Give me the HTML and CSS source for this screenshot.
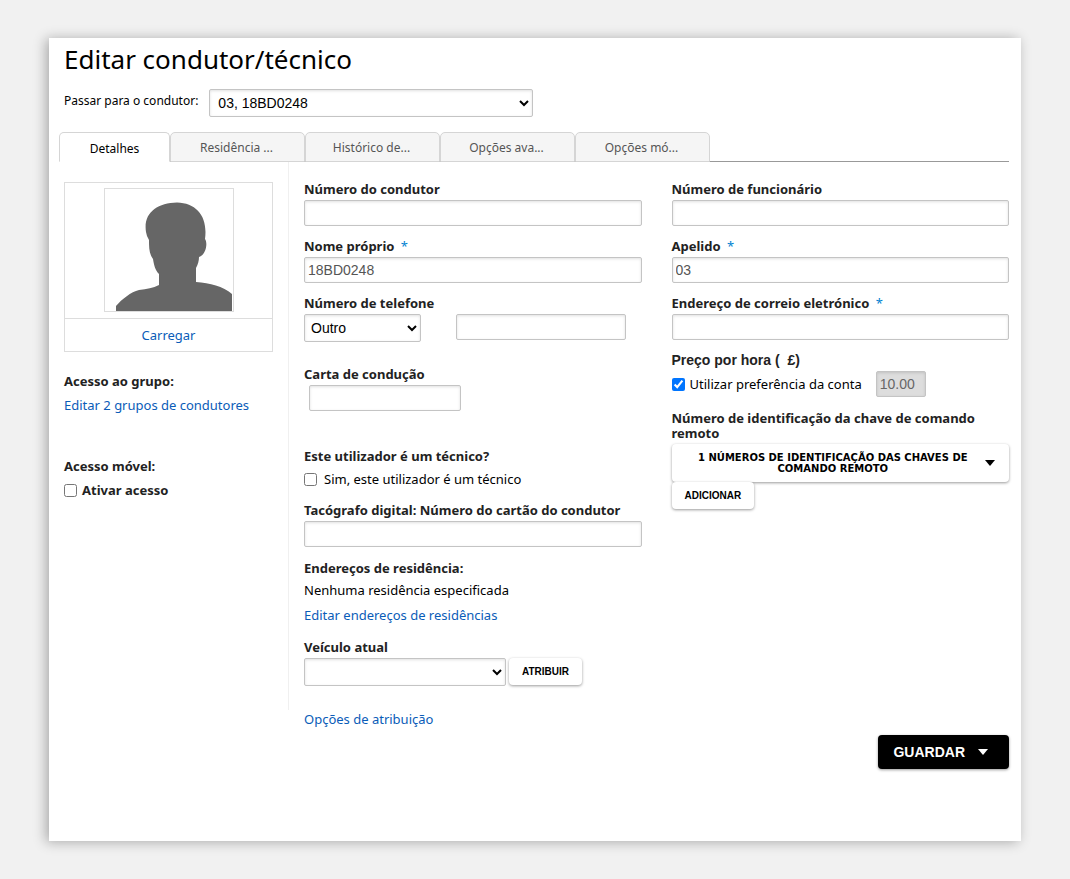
FILE: index.html
```html
<!DOCTYPE html>
<html lang="pt">
<head>
    <meta charset="UTF-8" />
    <meta name="viewport" content="width=device-width, initial-scale=1.0" />
    <title>Editar condutor/técnico</title>
    <link rel="stylesheet" href="styles.css">
</head>
<body>
    <main class="panel">
        <h1>Editar condutor/técnico</h1>

        <div class="switch-driver">
            <label for="driver">Passar para o condutor:</label>
            <select id="driver" name="driver">
                <option>03, 18BD0248</option>
            </select>
        </div>

        <nav class="tabs">
            <button type="button" class="tab active">Detalhes</button>
            <button type="button" class="tab">Residência ...</button>
            <button type="button" class="tab">Histórico de...</button>
            <button type="button" class="tab">Opções ava...</button>
            <button type="button" class="tab">Opções mó...</button>
        </nav>

        <form class="details">
            <aside class="side">
                <div class="photo-card">
                    <div class="photo">
                        <svg viewBox="0 0 128 122" width="128" height="122" aria-hidden="true">
                            <path fill="#666" d="M11 122V117C17 110 26 103 34 101C42 100 48 99 54 96V85C50 81 49 76 48 70C44 65 44 58 44 51L42 47L41 43C38 24 52 14 72 13.500C92 14 103 28 100 50C103 54 101 66 94 68C94 72 93 75 91 79V93C105 94 118 97 127 105V122Z" />
                        </svg>
                    </div>
                    <a href="#" class="upload">Carregar</a>
                </div>

                <h2>Acesso ao grupo:</h2>
                <a href="#" class="group-link">Editar 2 grupos de condutores</a>

                <h2>Acesso móvel:</h2>
                <label class="check bold"><input type="checkbox" name="mobileAccess" /> Ativar acesso</label>
            </aside>

            <div class="columns">
                <div class="column">
                    <div class="field">
                        <label for="driverNumber">Número do condutor</label>
                        <input type="text" id="driverNumber" />
                    </div>
                    <div class="field">
                        <label for="firstName">Nome próprio <span class="required">*</span></label>
                        <input type="text" id="firstName" value="18BD0248" />
                    </div>
                    <div class="field phone-field">
                        <label for="phoneType">Número de telefone</label>
                        <div class="phone-row">
                            <select id="phoneType">
                                <option>Outro</option>
                            </select>
                            <input type="text" id="phone" aria-label="Telefone" />
                        </div>
                    </div>
                    <div class="field licence-field">
                        <label for="licence">Carta de condução</label>
                        <input type="text" id="licence" />
                    </div>
                    <div class="field spaced">
                        <h2>Este utilizador é um técnico?</h2>
                        <label class="check wide"><input type="checkbox" name="technician" /> Sim, este utilizador é um técnico</label>
                    </div>
                    <div class="field spaced">
                        <label for="tachograph">Tacógrafo digital: Número do cartão do condutor</label>
                        <input type="text" id="tachograph" />
                    </div>
                    <div class="field spaced">
                        <h2>Endereços de residência:</h2>
                        <p>Nenhuma residência especificada</p>
                        <a href="#" class="address-link">Editar endereços de residências</a>
                    </div>
                    <div class="field vehicle-field">
                        <label for="vehicle">Veículo atual</label>
                        <div class="vehicle-row">
                            <select id="vehicle">
                                <option></option>
                            </select>
                            <button type="button" class="btn">ATRIBUIR</button>
                        </div>
                    </div>
                    <a href="#">Opções de atribuição</a>
                </div>

                <div class="column">
                    <div class="field">
                        <label for="employeeNumber">Número de funcionário</label>
                        <input type="text" id="employeeNumber" />
                    </div>
                    <div class="field">
                        <label for="lastName">Apelido <span class="required">*</span></label>
                        <input type="text" id="lastName" value="03" />
                    </div>
                    <div class="field">
                        <label for="email">Endereço de correio eletrónico <span class="required">*</span></label>
                        <input type="text" id="email" />
                    </div>
                    <div class="field rate-field">
                        <label for="rate">Preço por hora (&nbsp; £)</label>
                        <div class="rate-row">
                            <label class="check"><input type="checkbox" name="accountRate" checked /> Utilizar preferência da conta</label>
                            <input type="text" id="rate" value="10.00" disabled />
                        </div>
                    </div>
                    <div class="field">
                        <h2 class="fob-title">Número de identificação da chave de comando remoto</h2>
                        <button type="button" class="btn fob-button">
                            <span>1 NÚMEROS DE IDENTIFICAÇÃO DAS CHAVES DE COMANDO REMOTO</span>
                            <i class="caret"></i>
                        </button>
                        <button type="button" class="btn">ADICIONAR</button>
                    </div>
                </div>
            </div>
        </form>

        <div class="actions">
            <button type="button" class="save">GUARDAR <i class="caret"></i></button>
        </div>
    </main>
</body>
</html>
```
FILE: styles.css
```css
* {
    box-sizing: border-box;
}

body {
    margin: 0;
    padding: 38px 49px;
    min-height: 100vh;
    display: flex;
    background-color: #f1f1f1;
    font-family: "Noto Sans", sans-serif;
    font-size: 13px;
    line-height: 20px;
    color: #000;
}

.panel {
    flex: 1;
    padding: 5px 12px 24px 10px;
    background: #fff;
    box-shadow: -3px 1px 12px rgba(0, 0, 0, 0.3);
}

h1 {
    margin: 0 0 14px 5px;
    font-size: 26px;
    font-weight: normal;
    line-height: 32px;
}

h2,
.field > label {
    display: block;
    margin: 0;
    font-size: 13px;
    font-weight: bold;
    line-height: 18px;
    color: #222;
}

p {
    margin: 3px 0 0;
}

a {
    color: #0a5cb8;
    text-decoration: none;
}

input,
select,
button {
    font-family: "Liberation Sans", Arial, sans-serif;
}

input[type="text"],
select {
    border: 1px solid #c4c4c4;
    border-radius: 2px;
    background-color: #fff;
    box-shadow: inset 0 1px 3px rgba(0, 0, 0, 0.12);
    font-size: 14px;
}

input[type="text"] {
    width: 100%;
    height: 26px;
    padding: 0 3px;
    color: #555;
}

select {
    height: 28px;
    padding: 0 2px;
    color: #000;
}

input[type="checkbox"] {
    width: 13px;
    height: 13px;
    margin: 0;
}

.switch-driver {
    display: flex;
    gap: 11px;
    margin: 0 0 15px 5px;
    font-size: 12px;
    line-height: 24px;
}

.switch-driver select {
    width: 324px;
    padding-left: 4px;
}

/* tabs */
.tabs {
    display: flex;
    background: linear-gradient(#999, #999) bottom / 100% 1px no-repeat;
}

.tab {
    width: 135px;
    height: 30px;
    padding: 0 2px 0 0;
    border: 1px solid #d5d5d5;
    border-radius: 5px 5px 0 0;
    background: #f5f5f5;
    font-family: "Noto Sans", sans-serif;
    font-size: 12px;
    color: #555;
}

.tab.active {
    width: 111px;
    padding: 2px 0 0;
    border-bottom-color: #fff;
    background: #fff;
    color: #000;
}

.details {
    display: flex;
    align-items: flex-start;
}

.side {
    width: 230px;
    min-height: 548px;
    padding: 20px 15px 0 5px;
    border-right: 1px solid #f0f0f0;
}

.photo-card {
    margin-bottom: 20px;
    border: 1px solid #ddd;
    text-align: center;
}

.photo {
    width: 130px;
    height: 124px;
    margin: 5px auto 6px;
    border: 1px solid #ddd;
}

.photo svg {
    display: block;
}

.upload {
    display: block;
    border-top: 1px solid #ddd;
    line-height: 32px;
}

.group-link {
    display: block;
    margin: 5px 0 42px;
}

.check {
    display: flex;
    align-items: center;
    gap: 5px;
}

.check.bold {
    margin-top: 5px;
    font-weight: bold;
    color: #222;
}

.field > .check.wide {
    display: flex;
    gap: 7px;
    margin: 4px 0 0;
    font-weight: normal;
    line-height: 20px;
    color: #000;
}

.columns {
    flex: 1;
    display: grid;
    grid-template-columns: 1fr 1fr;
    gap: 30px;
    padding: 18px 0 0 15px;
}

.field {
    margin-bottom: 11px;
}

.field.spaced {
    margin-bottom: 12px;
}

.field > label {
    margin-bottom: 2px;
}

.required {
    margin-left: 3px;
    font-weight: normal;
    color: #0082d1;
}

.field.phone-field {
    margin-bottom: 23px;
}

.phone-row {
    display: flex;
    align-items: flex-start;
    gap: 35px;
}

.phone-row select {
    width: 117px;
}

.phone-row input[type="text"] {
    width: 170px;
}

.field.licence-field {
    margin-bottom: 36px;
}

.licence-field input[type="text"] {
    display: block;
    width: 152px;
    margin-left: 5px;
}

.address-link {
    display: block;
    margin: 5px 0 13px;
}

.field.vehicle-field {
    margin-bottom: 23px;
}

.vehicle-row {
    display: flex;
    gap: 3px;
}

.vehicle-row select {
    width: 202px;
}

.field.rate-field {
    margin-bottom: 14px;
}

.rate-field > label {
    font-family: "Liberation Sans", Arial, sans-serif;
    font-size: 14px;
}

.rate-row {
    display: flex;
    align-items: center;
    gap: 14px;
}

.rate-row input[type="text"] {
    width: 50px;
    background: #ddd;
    color: #666;
}

.fob-title {
    margin-bottom: 3px;
    line-height: 15px;
}

.btn {
    height: 27px;
    padding: 0 13px;
    border: none;
    border-radius: 4px;
    background: #fff;
    box-shadow: 0 1px 3px rgba(0, 0, 0, 0.4);
    font-size: 10px;
    font-weight: bold;
    color: #000;
}

.fob-button {
    display: flex;
    align-items: center;
    gap: 9px;
    width: 100%;
    height: 38px;
    padding: 0 14px 0 18px;
    font-family: "DejaVu Sans", sans-serif;
    line-height: 11px;
}

.fob-button span {
    flex: 1;
}

.caret {
    width: 0;
    border: 5px solid transparent;
    border-top: 6px solid currentColor;
    border-bottom: none;
}

.actions {
    display: flex;
    justify-content: flex-end;
    margin-top: 6px;
}

.save {
    display: flex;
    align-items: center;
    gap: 13px;
    height: 34px;
    padding: 0 21px 0 15px;
    border: none;
    border-radius: 4px;
    background: #000;
    box-shadow: 0 1px 3px rgba(0, 0, 0, 0.4);
    font-size: 14px;
    font-weight: bold;
    color: #fff;
}
```
